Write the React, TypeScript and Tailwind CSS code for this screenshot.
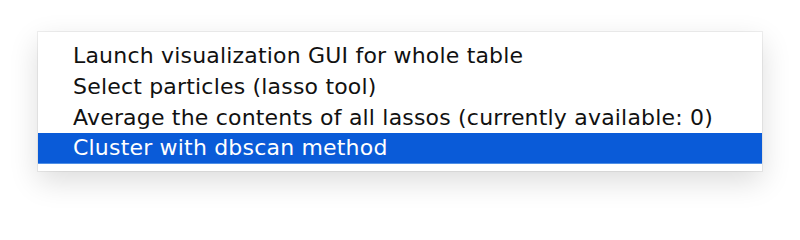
import React from "react";

const items = [
  "Launch visualization GUI for whole table",
  "Select particles (lasso tool)",
  "Average the contents of all lassos (currently available: 0)",
  "Cluster with dbscan method",
];

export default function App() {
  return (
    <div className="w-[800px] h-[216px] bg-white pt-[32px] pl-[38px]">
      <div
        className="w-[724px] bg-white pt-[8px] pb-[7px] shadow-[0_0_0_1px_rgba(0,0,0,0.06),0_10px_28px_rgba(0,0,0,0.14)]"
        style={{ fontFamily: '"DejaVu Sans", sans-serif' }}
      >
        {items.map((t, i) =>
          i === 3 ? (
            <div
              key={i}
              className="h-[31px] bg-[#0a5bd8] border-b border-[#4f8fe6] text-white pl-[35px] text-[22px] tracking-[0.19px] leading-[30px] flex items-center"
            >
              {t}
            </div>
          ) : (
            <div
              key={i}
              className="h-[31px] text-[#111] pl-[35px] text-[22px] tracking-[0.19px] leading-[31px] flex items-center"
            >
              {t}
            </div>
          )
        )}
      </div>
    </div>
  );
}
